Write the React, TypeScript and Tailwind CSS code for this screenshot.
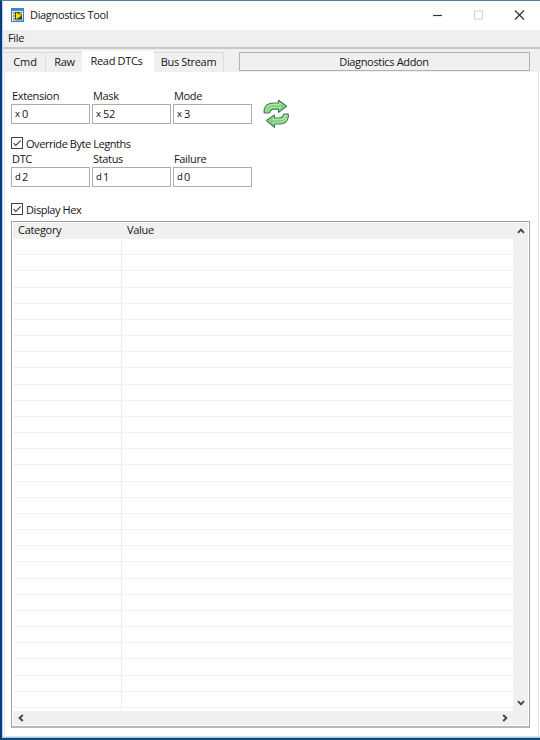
import React from "react";

const rows = Array.from({ length: 29 }, (_, i) => i);

function Check({ label }: { label: string }) {
  return (
    <label className="flex h-[13px] items-start leading-[13px] tracking-[-0.44px]">
      <svg width="12" height="12" viewBox="0 0 12 12" fill="none" className="shrink-0">
        <rect x="0.5" y="0.5" width="11" height="11" stroke="#444" fill="#fff" />
        <path d="M2.5 6.2 4.8 8.5 9.8 3.3" stroke="#444" strokeWidth="1.1" />
      </svg>
      <span className="ml-[3px]">{label}</span>
    </label>
  );
}

function Field({ label, radix, value }: { label: string; radix: string; value: string }) {
  return (
    <div className="w-[79px]">
      <div className="h-[15px] pl-px leading-[13px]">{label}</div>
      <div className="flex h-5 items-center border border-[#adadad] bg-white pl-[3px]">
        <span className="w-[7px] text-[9.5px] text-black">{radix}</span>
        <span>{value}</span>
      </div>
    </div>
  );
}

function Chevron({ turn }: { turn: string }) {
  return (
    <svg width="8" height="8" viewBox="0 0 8 8" fill="none" className={turn}>
      <path d="M1 5.8 4 2.6 7 5.8" stroke="#454545" strokeWidth="1.9" />
    </svg>
  );
}

function AppIcon() {
  return (
    <svg width="13" height="14" viewBox="0 0 13 14">
      <rect x="0.5" y="0.5" width="12" height="13" fill="#d6e9f5" stroke="#3c7fc4" />
      <path d="M0 1h13v2H0z" fill="#3b8ede" />
      <path d="M2 4h2v2H2zM2 7h2v2H2zM2 10h2v2H2z" fill="#d19a37" />
      <rect x="4" y="4" width="7" height="7.5" fill="#4a4712" />
      <path d="M5 4.5 10.5 7.7 5 11z" fill="#f4e51c" />
      <path d="M8.5 4.5h2.5v2H8.5z" fill="#e6d529" />
      <path d="M4 12h8" stroke="#3978c5" />
    </svg>
  );
}

function Refresh() {
  return (
    <svg width="28" height="30" viewBox="0 0 28 30" strokeLinejoin="round">
      <defs>
        <linearGradient id="leaf" x1="0" y1="0" x2="0" y2="1">
          <stop stopColor="#c0f3b4" />
          <stop offset="1" stopColor="#86e083" />
        </linearGradient>
      </defs>
      <g fill="url(#leaf)" stroke="#467a55" strokeWidth="1.2">
        <path d="M1.2 14V10.5C2.1 5.5 6.5 4 11 4H15.5V1.3L23.5 7.2 15.5 13.3V10.2H11C8 10.2 7 11.5 6.3 14Z" />
        <path d="M25.3 15.2V18C24.3 23.5 20.5 25 16.5 25H11.5V28.2L3.5 21.5 11.5 16V19H16C19 19 20.1 17.5 20.9 15.2Z" />
      </g>
      <path d="M4 11.5C5 7.5 7.5 7 11 7H20M17.5 4.7 20.5 7.2 17.5 9.8M23.3 17C22 21 20 22 16.5 22H7M10 19.2 6.7 21.8 10 24.5" fill="none" stroke="#5db35c" strokeWidth="0.8" />
    </svg>
  );
}

export default function App() {
  return (
    <div className="flex h-[740px] w-[540px] flex-col overflow-hidden border-t border-b-2 border-l-2 border-t-[#54809f] border-b-[#0a4a86] border-l-[#0b3a80] bg-white font-['Open_Sans','Noto_Sans',sans-serif] text-[11px] tracking-[-0.34px] whitespace-nowrap text-[#161616]">
      <div className="flex min-h-0 flex-1 flex-col border-l border-l-[#b4d4ea]">
        <header className="flex h-[29px] shrink-0 items-center pb-[2px] pl-2">
          <AppIcon />
          <span className="mt-px ml-[6px]">Diagnostics Tool</span>
          <svg className="ml-auto" width="110" height="12" viewBox="0 0 110 12" fill="none">
            <path d="M3 6.5h9" stroke="#333" strokeWidth="1.2" />
            <rect x="44.5" y="2" width="8" height="8" stroke="#d2d2d2" />
            <path d="M85 1.5 94 10.5M94 1.5 85 10.5" stroke="#333" strokeWidth="1.2" />
          </svg>
        </header>
        <nav className="h-[17px] shrink-0 bg-[#efefef] pl-[5px] leading-[16px]">File</nav>
        <div className="h-[2px] shrink-0 bg-[#c8c8c8]" />
        <div className="flex h-[23px] shrink-0 bg-[#f0f0f0] pl-px pt-[2px]">
          <div className="mt-px flex w-[42px] items-center justify-center border-t border-r border-[#dcdcdc] pl-px tracking-[-0.1px]">Cmd</div>
          <div className="mt-px flex w-[36px] items-center justify-center border-t border-[#dcdcdc] pl-px">Raw</div>
          <div className="flex w-[72px] justify-center bg-white pr-[3px] leading-[20px]">Read DTCs</div>
          <div className="mt-px flex w-[70px] items-center justify-center border-t border-r border-[#dcdcdc]">Bus Stream</div>
          <div className="ml-[15px] mt-px flex h-[19px] w-[291px] items-center justify-center border border-[#b2b2b2] pt-px pr-px leading-[16px]">Diagnostics Addon</div>
        </div>
        <main className="mx-px flex min-h-0 flex-1 flex-col border-r border-l border-[#e5e5e5] bg-white pl-[6px]">
          <div className="mt-[17px] flex gap-[2px]">
            <Field label="Extension" radix="x" value="0" />
            <Field label="Mask" radix="x" value="52" />
            <Field label="Mode" radix="x" value="3" />
            <div className="ml-[9px] mt-[10px] h-[25px]">
              <Refresh />
            </div>
          </div>
          <div className="mt-[13px]">
            <Check label="Override Byte Legnths" />
          </div>
          <div className="mt-[2px] flex gap-[2px]">
            <Field label="DTC" radix="d" value="2" />
            <Field label="Status" radix="d" value="1" />
            <Field label="Failure" radix="d" value="0" />
          </div>
          <div className="mt-4">
            <Check label="Display Hex" />
          </div>
          <section className="mt-[5px] flex h-[507px] w-[519px] shrink-0 flex-col border border-b-2 border-[#a0a0a0] border-b-[#b8b8b8] p-px">
            <div className="flex min-h-0 flex-1">
              <div className="flex w-[500px] flex-col">
                <div className="flex h-[16px] shrink-0 bg-[#f0f0f0] leading-[14px] tracking-[-0.3px]">
                  <span className="w-[109px] pl-[5px]">Category</span>
                  <span className="pl-[5px]">Value</span>
                </div>
                <div className="flex h-[469px] shrink-0 flex-col">
                  {rows.map((row) => (
                    <div key={row} className="flex flex-1 border-b border-[#f1f1f1]">
                      <div className="w-[109px] border-r border-[#ececec]" />
                    </div>
                  ))}
                </div>
                <div className="w-[109px] flex-1 border-r border-[#ececec]" />
              </div>
              <div className="flex flex-1 flex-col items-center justify-between bg-[#f0f0f0] pt-1 pb-1">
                <Chevron turn="rotate-0" />
                <Chevron turn="rotate-180" />
              </div>
            </div>
            <div className="flex h-[14px] shrink-0 items-center justify-between bg-[#f0f0f0] pr-[19px] pl-1">
              <Chevron turn="-rotate-90" />
              <Chevron turn="rotate-90" />
            </div>
          </section>
        </main>
        <div className="h-px bg-[#e3e7ea]" />
        <div className="h-px bg-[#9fc5de]" />
      </div>
    </div>
  );
}
